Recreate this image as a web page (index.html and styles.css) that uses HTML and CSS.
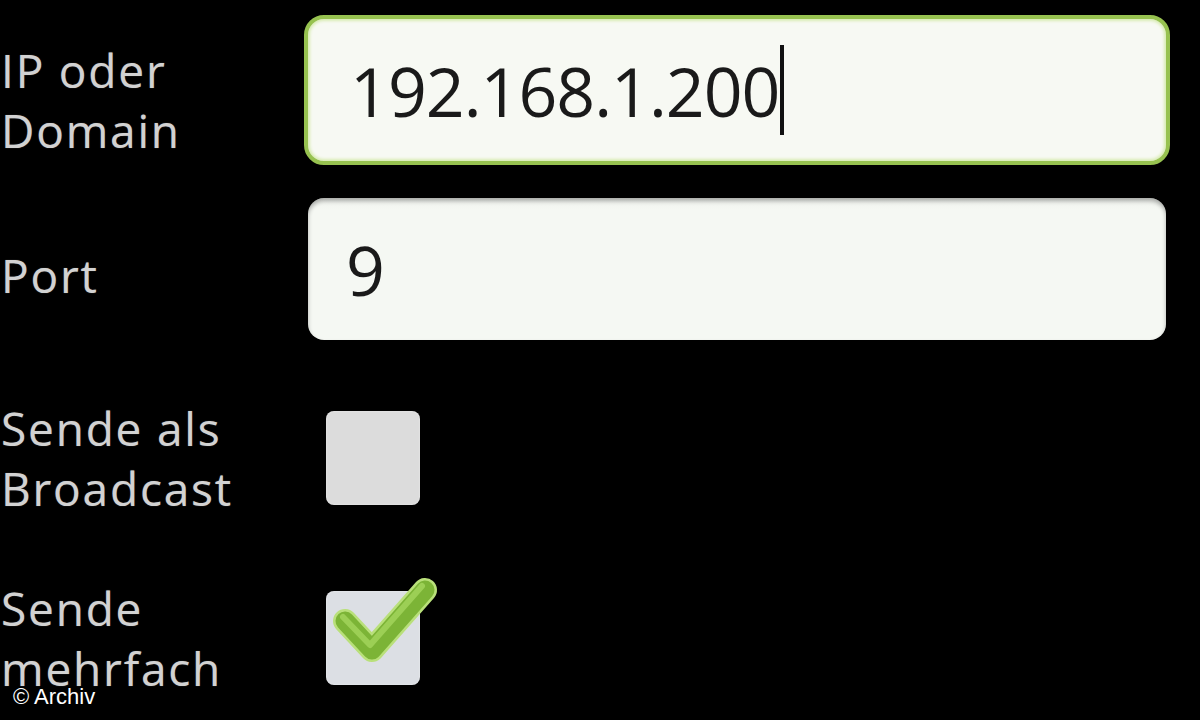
FILE: index.html
```html
<!DOCTYPE html>
<html lang="de">
<head>
<meta charset="utf-8">
<title>Wake on LAN</title>
<link rel="stylesheet" href="styles.css">
</head>
<body>
<main class="form">
  <div class="row row-ip">
    <div class="label label-ip">IP oder<br>Domain</div>
    <div class="field field-focused">
      <span class="value value-ip">192.168.1.200</span><span class="cursor"></span>
    </div>
  </div>
  <div class="row row-port">
    <div class="label label-port">Port</div>
    <div class="field">
      <span class="value">9</span>
    </div>
  </div>
  <div class="row row-broadcast">
    <div class="label">Sende als<br>Broadcast</div>
    <div class="checkbox"></div>
  </div>
  <div class="row row-multi">
    <div class="label">Sende<br>mehrfach</div>
    <div class="checkbox checkbox-checked">
      <svg class="checkmark" width="130" height="110" viewBox="0 0 130 110">
        <polyline points="19,50 46,79 99,19" fill="none" stroke="#b9e07a" stroke-width="24" stroke-linecap="round" stroke-linejoin="round"/>
        <polyline points="19,50 46,79 99,19" fill="none" stroke="#7cb436" stroke-width="19" stroke-linecap="round" stroke-linejoin="round"/>
        <polyline points="17,46 44,74 96,15" fill="none" stroke="#9ccf55" stroke-width="6" stroke-linecap="round" stroke-linejoin="round"/>
      </svg>
    </div>
  </div>
</main>
<div class="credit">© Archiv</div>
</body>
</html>
```
FILE: styles.css
```css
html, body {
  margin: 0;
  padding: 0;
  background: #000;
}
body {
  width: 1200px;
  height: 720px;
  overflow: hidden;
  position: relative;
  font-family: "Open Sans", "DejaVu Sans", sans-serif;
}
.form {
  display: flex;
  flex-direction: column;
  padding-left: 1px;
}
.row {
  display: flex;
  align-items: center;
}
.row-ip { margin-top: 15px; }
.row-port { margin-top: 29px; }
.row-broadcast { margin-top: 54px; }
.row-multi { margin-top: 60px; }

.label {
  width: 303px;
  flex: none;
  box-sizing: border-box;
  font-size: 46px;
  letter-spacing: 1.8px;
  line-height: 60px;
  color: #d2d2d2;
  text-shadow: 0 0 1px rgba(200,200,200,0.5);
}
.label-ip { padding-top: 20px; }
.label-port { padding-top: 11px; }

.field {
  box-sizing: border-box;
  width: 858px;
  height: 142px;
  margin: 4px;
  border-radius: 16px;
  background: linear-gradient(#eef1ec 0%, #f5f8f3 8%, #f5f8f3 100%);
  box-shadow: inset 0 3px 4px rgba(0,0,0,0.3);
  display: flex;
  align-items: center;
  padding-left: 38px;
  color: #1a1a1a;
  font-size: 68px;
}
.field-focused {
  width: 866px;
  height: 150px;
  margin: 0;
  border: 4px solid #97c250;
  border-radius: 20px;
  padding-left: 42px;
  background: #f7f9f3;
  box-shadow: inset 0 0 3px 2px #d9ecb4;
}
.value-ip {
  letter-spacing: -1px;
}
.cursor {
  display: inline-block;
  width: 4px;
  height: 90px;
  margin-left: 1px;
  background: #111;
}
.checkbox {
  position: relative;
  flex: none;
  width: 94px;
  height: 94px;
  margin-left: 22px;
  border-radius: 8px;
  background: #dcdcdc;
  box-shadow: inset 0 0 2px rgba(255,255,255,0.6);
}
.checkbox-checked {
  background: #dcdfe4;
}
.checkmark {
  position: absolute;
  left: 0;
  top: -20px;
  overflow: visible;
}
.credit {
  position: absolute;
  left: 13px;
  top: 686px;
  font-family: "Liberation Sans", Arial, sans-serif;
  font-size: 22px;
  line-height: 22px;
  color: #fff;
}
```
